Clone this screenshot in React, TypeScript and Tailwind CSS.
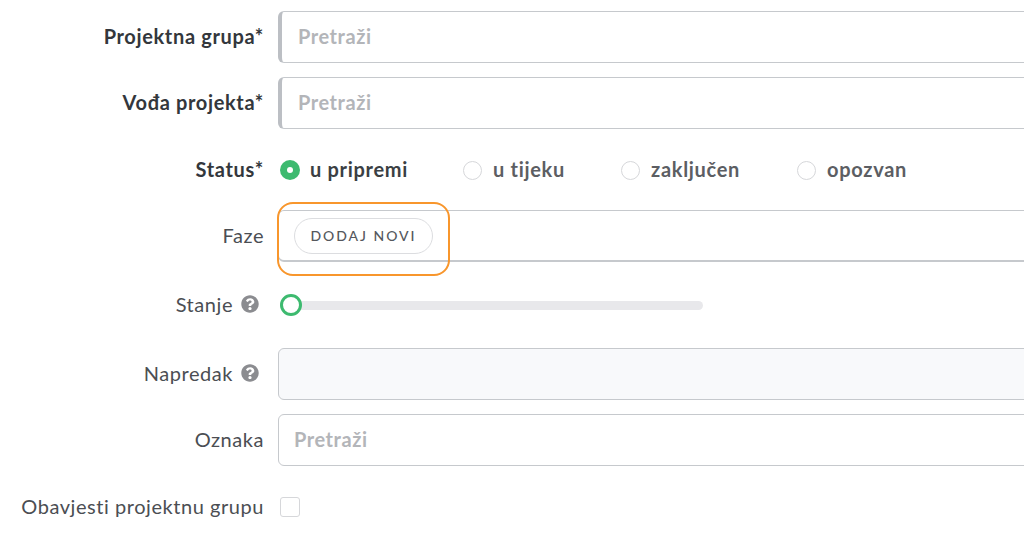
import { FaQuestionCircle } from "react-icons/fa";

const font = "font-['Lato','Liberation_Sans',sans-serif]";

function Row({ label, strong, help, mt, children }: { label: string; strong?: boolean; help?: boolean; mt: string; children: React.ReactNode }) {
  return (
    <div className={`flex items-center h-[52px] ${mt}`}>
      <div className={`w-[264px] shrink-0 flex justify-end items-center text-[20px] leading-none pb-[2px] ${strong ? "font-bold text-[#33373c] tracking-[0.65px]" : "text-[#4b4e53] tracking-[0.55px]"}`}>
        <span>{label}</span>
        {help && <FaQuestionCircle className="ml-[8px] mr-[5px] text-[#8b8c90] w-[18px] h-[18px]" />}
      </div>
      <div className="ml-[14px] w-[800px] shrink-0">{children}</div>
    </div>
  );
}

function SearchBox({ accent }: { accent?: boolean }) {
  return (
    <div className={`h-[52px] rounded-[6px] border border-[#c6c9cd] bg-white flex items-center pb-[2px] text-[20px] tracking-[0.55px] font-bold text-[#b3b5b9] ${accent ? "border-l-[4px] border-l-[#bcbfc4] pl-[16px]" : "pl-[15px]"}`}>
      Pretraži
    </div>
  );
}

function Radio({ label, active, w }: { label: string; active?: boolean; w: string }) {
  return (
    <div className={`flex items-center ${w}`}>
      {active ? (
        <span className="w-[20px] h-[20px] rounded-full bg-[#3dba6f] flex items-center justify-center">
          <span className="w-[6px] h-[6px] rounded-full bg-white" />
        </span>
      ) : (
        <span className="w-[19px] h-[19px] rounded-full border border-[#d6d7da] bg-white" />
      )}
      <span className={`pb-[2px] text-[20px] tracking-[0.7px] leading-none font-bold ${active ? "ml-[10px] text-[#3b3f44]" : "ml-[11px] text-[#5c5e63]"}`}>{label}</span>
    </div>
  );
}

export default function App() {
  return (
    <div className={`relative w-[1024px] h-[541px] overflow-hidden bg-white pt-[11px] ${font}`}>
      <Row label="Projektna grupa*" strong mt="">
        <SearchBox accent />
      </Row>
      <Row label="Vođa projekta*" strong mt="mt-[14px]">
        <SearchBox accent />
      </Row>
      <Row label="Status*" strong mt="mt-[15px]">
        <div className="flex items-center pl-[2px]">
          <Radio label="u pripremi" active w="w-[183px]" />
          <Radio label="u tijeku" w="w-[158px]" />
          <Radio label="zaključen" w="w-[176px]" />
          <Radio label="opozvan" w="w-auto" />
        </div>
      </Row>
      <Row label="Faze" mt="mt-[14px]">
        <div className="h-[52px] rounded-[6px] border border-[#c6c9cd] border-b-2 bg-white flex items-center pl-[15px]">
          <button className="h-[36px] w-[139px] rounded-full border border-[#dcdde0] bg-white text-[14px] font-medium tracking-[0.14em] text-[#55585d]">
            DODAJ NOVI
          </button>
        </div>
      </Row>
      <Row label="Stanje" help mt="mt-[17px]">
        <div className="relative flex items-center">
          <div className="ml-[2px] w-[423px] h-[9px] rounded-full bg-[#e8e8eb]" />
          <span className="absolute left-[2px] top-1/2 -translate-y-1/2 w-[22px] h-[22px] rounded-full border-[3px] border-[#3dba6f] bg-white" />
        </div>
      </Row>
      <Row label="Napredak" help mt="mt-[17px]">
        <div className="h-[52px] rounded-[6px] border border-[#c6c9cd] bg-[#f8f9fb]" />
      </Row>
      <Row label="Oznaka" mt="mt-[14px]">
        <SearchBox />
      </Row>
      <Row label="Obavjesti projektnu grupu" mt="mt-[15px]">
        <span className="block ml-[2px] w-[20px] h-[20px] rounded-[3px] border border-[#d6d7da] bg-white" />
      </Row>
      <div className="absolute left-[277px] top-[202px] w-[173px] h-[74px] rounded-[16px] border-2 border-[#f8962c]" />
    </div>
  );
}
